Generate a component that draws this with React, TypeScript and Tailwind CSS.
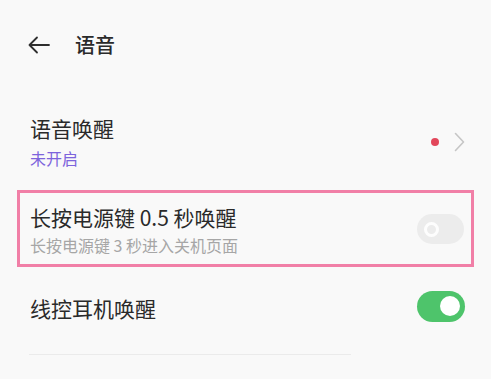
export default function App() {
  return (
    <div
      className="w-[491px] h-[379px] overflow-hidden bg-[#f9f9f9] text-[#2a2a2a]"
      style={{ fontFamily: '"Noto Sans CJK SC", "Noto Sans", sans-serif' }}
    >
      {/* header */}
      <div className="h-[92px] flex items-center pl-[27px] pb-[2px]">
        <svg width="24" height="20" viewBox="0 0 24 20" fill="none" stroke="#2e2e2e" strokeWidth="1.8" strokeLinecap="round" strokeLinejoin="round">
          <path d="M22 10H2.5M10 2.5L2.5 10L10 17.5" />
        </svg>
        <span className="ml-[24px] text-[20px] leading-[28px] font-medium">语音</span>
      </div>

      {/* voice wake */}
      <div className="h-[98px] flex items-center pl-[30px] pr-[26px]">
        <div className="flex-1 flex flex-col">
          <span className="text-[21px] leading-[28px]">语音唤醒</span>
          <span className="mt-[6px] text-[16px] leading-[20px] text-[#7d64dc]">未开启</span>
        </div>
        <span className="w-[8px] h-[8px] rounded-full bg-[#e2475b] mr-[15px] mt-[2px]" />
        <svg width="11" height="20" viewBox="0 0 11 20" fill="none" stroke="#c6c6c6" strokeWidth="1.6" strokeLinecap="round" strokeLinejoin="round" className="mt-[2px]">
          <path d="M1.5 1.5L9.5 10L1.5 18.5" />
        </svg>
      </div>

      {/* power key wake, highlighted */}
      <div className="mx-[17px] h-[77px] border-[3px] border-[#f17fa7] flex items-center pl-[10px] pr-[7px]">
        <div className="flex-1 flex flex-col">
          <span className="text-[21px] leading-[28px]">长按电源键 0.5 秒唤醒</span>
          <span className="mt-[4px] text-[16px] leading-[20px] text-[#a6a6a6]">长按电源键 3 秒进入关机页面</span>
        </div>
        <div className="w-[47px] h-[30px] rounded-full bg-[#ececec] flex items-center pl-[7px] mt-[1px]">
          <span className="w-[15px] h-[15px] rounded-full border-[3px] border-[#fdfdfd]" />
        </div>
      </div>

      {/* wired headset wake */}
      <div className="h-[78px] flex items-center pl-[30px] pr-[26px]">
        <span className="flex-1 text-[21px] leading-[28px] mt-[3px]">线控耳机唤醒</span>
        <div className="w-[48px] h-[31px] rounded-full bg-[#4ec46b] flex items-center justify-end pr-[5px]">
          <span className="w-[20px] h-[20px] rounded-full bg-white" />
        </div>
      </div>

      <div className="ml-[29px] w-[322px] h-px bg-[#ebebeb] mt-[9px]" />
    </div>
  );
}
